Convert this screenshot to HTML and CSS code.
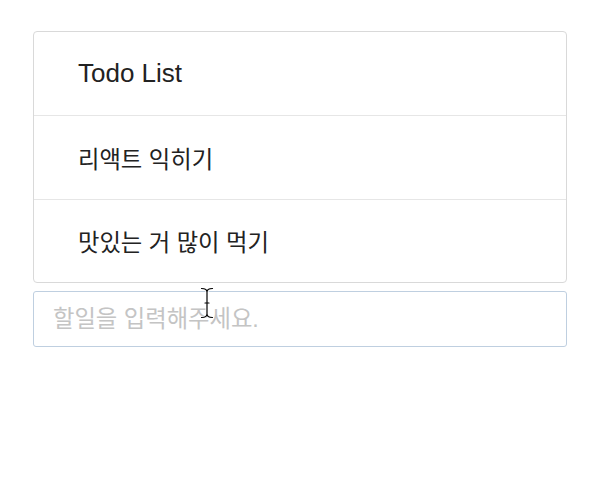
FILE: index.html
```html
<!DOCTYPE html>
<html lang="ko">
<head>
<meta charset="utf-8">
<title>Todo List</title>
<link rel="stylesheet" href="styles.css">
</head>
<body>
<div class="app">
  <ul class="list">
    <li class="item" lang="en">Todo List</li>
    <li class="item">리액트 익히기</li>
    <li class="item">맛있는 거 많이 먹기</li>
  </ul>
  <input class="todo-input" type="text" placeholder="할일을 입력해주세요.">
  <svg class="cursor" width="14" height="32" viewBox="0 0 14 32" aria-hidden="true">
    <g fill="none" stroke-linecap="round" stroke-linejoin="round">
      <path d="M1.5 1.5 C4 1.5 7 2.5 7 5 C7 2.5 10 1.5 12.5 1.5 M7 5 V27 M7 27 C7 29.5 4 30.5 1.5 30.5 M7 27 C7 29.5 10 30.5 12.5 30.5 M5 16 H9" stroke="#fff" stroke-width="3"/>
      <path d="M1.5 1.5 C4 1.5 7 2.5 7 5 C7 2.5 10 1.5 12.5 1.5 M7 5 V27 M7 27 C7 29.5 4 30.5 1.5 30.5 M7 27 C7 29.5 10 30.5 12.5 30.5 M5 16 H9" stroke="#000" stroke-width="1.2"/>
    </g>
  </svg>
</div>
</body>
</html>
```

FILE: styles.css
```css
html, body {
  margin: 0;
  padding: 0;
  background: #fff;
}
body {
  font-family: "Liberation Sans", "Noto Sans CJK KR", sans-serif;
  color: #222;
}
.app {
  position: relative;
  width: 534px;
  margin: 31px auto 0;
  display: flex;
  flex-direction: column;
  gap: 8px;
}
.list {
  list-style: none;
  margin: 0;
  padding: 0;
  border: 1px solid #d9d9d9;
  border-radius: 4px;
}
.item {
  height: 83px;
  display: flex;
  align-items: center;
  padding-left: 44px;
  font-size: 23.3px;
  border-bottom: 1px solid #e6e6e6;
}
.item:lang(en) {
  font-size: 26px;
}
.item:last-child {
  border-bottom: none;
  height: 82px;
}
.todo-input {
  box-sizing: border-box;
  height: 56px;
  width: 100%;
  border: 1px solid #bfcfe0;
  border-radius: 3px;
  padding: 0 0 0 19px;
  font-family: "Liberation Sans", "Noto Sans CJK KR", sans-serif;
  font-size: 23.3px;
  color: #222;
  outline: none;
}
.todo-input::placeholder {
  color: #c4c4c4;
}
.cursor {
  position: absolute;
  left: 167px;
  top: 256px;
}
```
